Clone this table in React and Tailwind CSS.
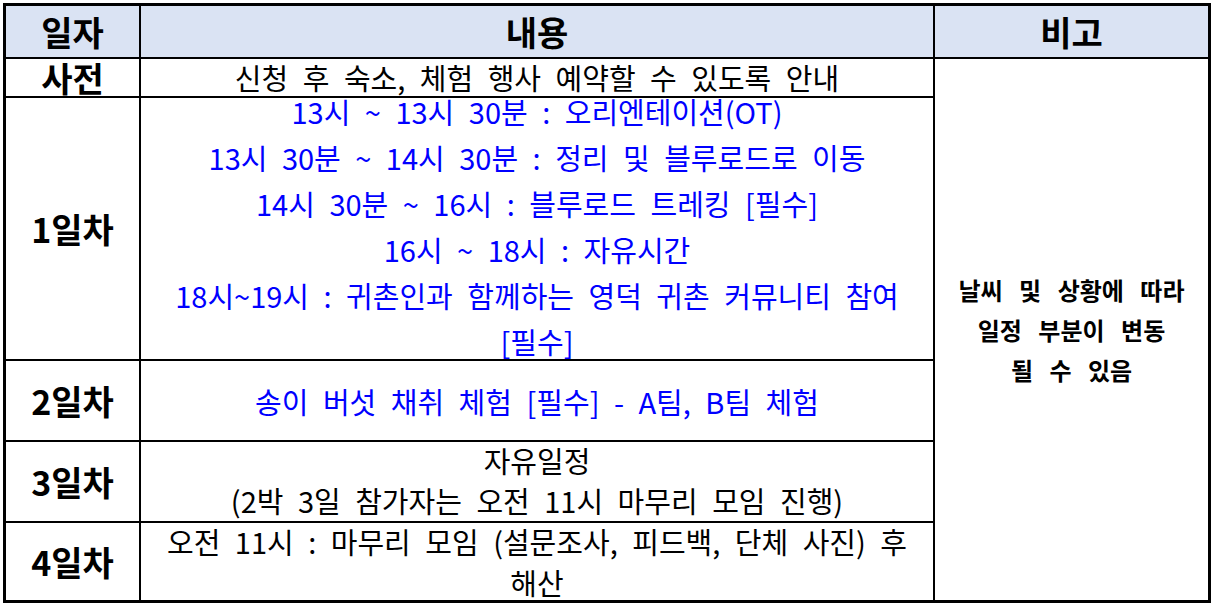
const font = { fontFamily: '"Noto Sans CJK KR", "Noto Sans", sans-serif' };

const blueLines = [
  '13시 ~ 13시 30분 : 오리엔테이션(OT)',
  '13시 30분 ~ 14시 30분 : 정리 및 블루로드로 이동',
  '14시 30분 ~ 16시 : 블루로드 트레킹 [필수]',
  '16시 ~ 18시 : 자유시간',
  '18시~19시 : 귀촌인과 함께하는 영덕 귀촌 커뮤니티 참여',
  '[필수]',
];

function DayCell({ children }) {
  return (
    <div className="bg-white flex items-center justify-center text-[34px] leading-none font-bold text-black">
      {children}
    </div>
  );
}

function Body({ children, blue = false, className = '' }) {
  return (
    <div
      className={`bg-white flex flex-col items-center justify-center text-center text-[29px] [word-spacing:8px] ${
        blue ? 'text-[#0000ff]' : 'text-black'
      } ${className}`}
    >
      {children}
    </div>
  );
}

export default function App() {
  return (
    <div className="w-[1215px] h-[608px] bg-white pl-[3px] pt-[3px]" style={font}>
      <div className="grid w-[1208px] bg-black p-[3px] gap-[2px] grid-cols-[133px_792px_273px] grid-rows-[51px_37px_261px_79px_79px_77px]">
        <div className="bg-[#dae3f3] flex items-center justify-center text-[34px] leading-none font-bold">일자</div>
        <div className="bg-[#dae3f3] flex items-center justify-center text-[34px] leading-none font-bold">내용</div>
        <div className="bg-[#dae3f3] flex items-center justify-center text-[34px] leading-none font-bold">비고</div>

        <DayCell>사전</DayCell>
        <Body className="leading-[37px]">신청 후 숙소, 체험 행사 예약할 수 있도록 안내</Body>
        <div className="row-span-5 bg-white flex flex-col items-center justify-center text-[24px] font-bold leading-[40px] text-center [word-spacing:11px]">
          <span>날씨 및 상황에 따라</span>
          <span>일정 부분이 변동</span>
          <span>될 수 있음</span>
        </div>

        <DayCell>1일차</DayCell>
        <Body blue className="leading-[46px] pb-[5px]">
          {blueLines.map((line) => (
            <span key={line}>{line}</span>
          ))}
        </Body>

        <DayCell>2일차</DayCell>
        <Body blue className="leading-[40px]">송이 버섯 채취 체험 [필수] - A팀, B팀 체험</Body>

        <DayCell>3일차</DayCell>
        <Body className="leading-[40px] pb-[3px]">
          <span>자유일정</span>
          <span>(2박 3일 참가자는 오전 11시 마무리 모임 진행)</span>
        </Body>

        <DayCell>4일차</DayCell>
        <Body className="leading-[41px]">
          <span>오전 11시 : 마무리 모임 (설문조사, 피드백, 단체 사진) 후</span>
          <span>해산</span>
        </Body>
      </div>
    </div>
  );
}
